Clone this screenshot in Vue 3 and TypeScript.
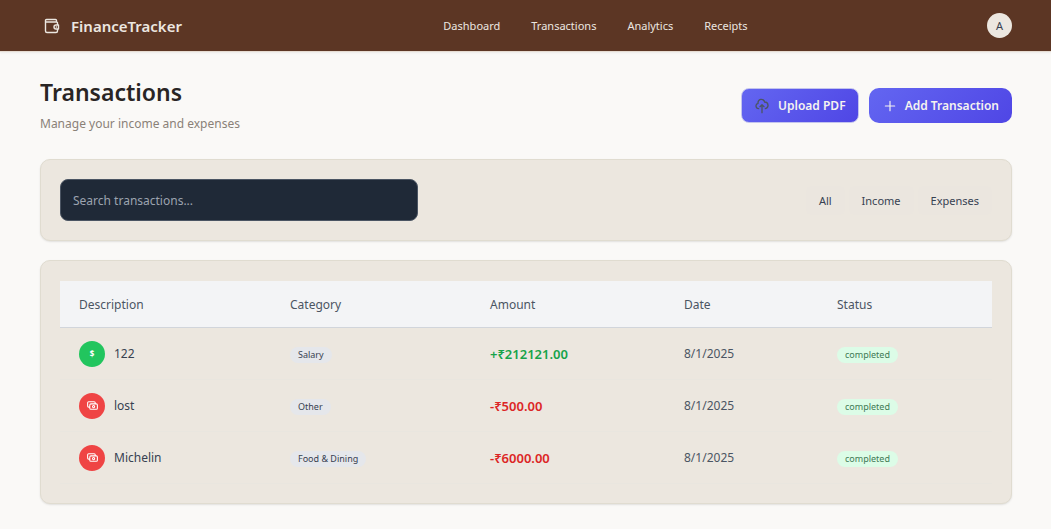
<script setup lang="ts">
import { computed, ref } from 'vue'

interface Transaction {
  id: number
  description: string
  category: string
  amount: number
  date: string
  status: string
}

const links: string[] = ['Dashboard', 'Transactions', 'Analytics', 'Receipts']
const filters: string[] = ['All', 'Income', 'Expenses']
const columns: string[] = ['Description', 'Category', 'Amount', 'Date', 'Status']

const transactions: Transaction[] = [
  { id: 1, description: '122', category: 'Salary', amount: 212121, date: '8/1/2025', status: 'completed' },
  { id: 2, description: 'lost', category: 'Other', amount: -500, date: '8/1/2025', status: 'completed' },
  { id: 3, description: 'Michelin', category: 'Food & Dining', amount: -6000, date: '8/1/2025', status: 'completed' },
]

const search = ref('')
const filter = ref('All')

const visible = computed(() =>
  transactions.filter(
    (t) =>
      t.description.toLowerCase().includes(search.value.toLowerCase()) &&
      (filter.value === 'All' || (filter.value === 'Income') === t.amount > 0),
  ),
)

function money(amount: number): string {
  return `${amount > 0 ? '+' : '-'}₹${Math.abs(amount).toFixed(2)}`
}
</script>

<template>
  <div class="page">
    <header class="topbar">
      <a class="brand" href="#">
        <svg class="wallet" viewBox="0 0 16 16" aria-hidden="true">
          <path d="M13.500 6.500V5a1 1 0 0 0-1-1H2.500a1 1 0 0 1-1-1v-.5a1 1 0 0 1 1-1H11.500a1 1 0 0 1 1 1V4M1.500 3v10a1.500 1.500 0 0 0 1.500 1.500h9a1.500 1.500 0 0 0 1.500-1.500v-1.500M14.500 7H12a2 2 0 0 0 0 4H14.500Z" />
          <path d="M12.200 9h.3" />
        </svg>
        <span>FinanceTracker</span>
      </a>
      <nav class="nav" aria-label="Main">
        <a v-for="link in links" :key="link" href="#">{{ link }}</a>
      </nav>
      <button class="avatar" type="button" aria-label="Account">A</button>
    </header>

    <main class="main">
      <section class="heading">
        <div>
          <h1>Transactions</h1>
          <p>Manage your income and expenses</p>
        </div>
        <div class="actions">
          <button class="action upload" type="button">
            <svg viewBox="0 0 24 24" aria-hidden="true">
              <path d="M7 16a4 4 0 0 1-.88-7.903A5 5 0 1 1 15.9 6L16 6a5 5 0 0 1 1 9.900M15 13l-3-3m0 0l-3 3m3-3v12" />
            </svg>
            Upload PDF
          </button>
          <button class="action" type="button">
            <svg viewBox="0 0 24 24" aria-hidden="true"><path d="M12 4v16M4 12h16" /></svg>
            Add Transaction
          </button>
        </div>
      </section>

      <section class="card toolbar">
        <input v-model="search" type="text" aria-label="Search transactions" placeholder="Search transactions..." />
        <div class="filters">
          <button v-for="f in filters" :key="f" type="button" :aria-pressed="filter === f" @click="filter = f">
            {{ f }}
          </button>
        </div>
      </section>

      <section class="card listing">
        <table>
          <thead>
            <tr>
              <th v-for="column in columns" :key="column" scope="col">{{ column }}</th>
            </tr>
          </thead>
          <tbody>
            <tr v-for="t in visible" :key="t.id">
              <td>
                <div class="description">
                  <span class="mark" :class="t.amount > 0 ? 'income' : 'expense'">
                    <b v-if="t.amount > 0">$</b>
                    <svg v-else viewBox="0 0 24 24" aria-hidden="true">
                      <path d="M17 9V7a2 2 0 0 0-2-2H5a2 2 0 0 0-2 2v6a2 2 0 0 0 2 2h2m2 4h10a2 2 0 0 0 2-2v-6a2 2 0 0 0-2-2H9a2 2 0 0 0-2 2v6a2 2 0 0 0 2 2zm7-5a2 2 0 1 1-4 0 2 2 0 0 1 4 0z" />
                    </svg>
                  </span>
                  {{ t.description }}
                </div>
              </td>
              <td><span class="tag">{{ t.category }}</span></td>
              <td class="amount" :class="t.amount > 0 ? 'plus' : 'minus'">{{ money(t.amount) }}</td>
              <td class="date">{{ t.date }}</td>
              <td><span class="tag done">{{ t.status }}</span></td>
            </tr>
          </tbody>
        </table>
      </section>
    </main>
  </div>
</template>

<style>
body {
  margin: 0;
  background: #faf9f7;
}
</style>

<style scoped>
.page {
  color: #374151;
  font: 12px/20px 'Noto Sans', 'Open Sans', sans-serif;
}

button,
input {
  font: inherit;
}

a {
  color: inherit;
  text-decoration: none;
}

svg {
  fill: none;
  stroke: currentColor;
  stroke-linecap: round;
  stroke-linejoin: round;
  stroke-width: 2;
}

.topbar {
  display: flex;
  align-items: center;
  justify-content: space-between;
  height: 52px;
  padding: 0 39px 0 44px;
  background: #5c3624;
  border-bottom: 1px solid #e7ddd3;
  box-shadow: 0 1px 2px rgb(0 0 0 / 6%);
  box-sizing: border-box;
  color: #ece7e0;
}

.brand {
  display: flex;
  align-items: center;
  gap: 11px;
  padding-right: 22px;
  font-size: 15px;
  font-weight: 600;
}

.wallet {
  width: 16px;
  height: 16px;
  stroke-width: 1.4;
}

.nav {
  display: flex;
  gap: 31px;
  font-size: 11px;
}

.avatar {
  width: 25px;
  height: 25px;
  padding: 0;
  border: 0;
  border-radius: 50%;
  background: #ece7e0;
  color: #374151;
  font-size: 11px;
}

.main {
  display: flex;
  flex-direction: column;
  gap: 19px;
  padding: 25px 39px 25px 40px;
}

.heading {
  display: flex;
  align-items: center;
  justify-content: space-between;
  padding-bottom: 7px;
}

h1 {
  margin: 0;
  color: #292524;
  font-size: 23px;
  font-weight: 600;
  line-height: 30px;
}

p {
  margin: 6px 0 0;
  padding-top: 1px;
  color: #8a8178;
  line-height: 19px;
}

.actions {
  display: flex;
  align-items: center;
  gap: 10px;
}

.action {
  display: flex;
  align-items: center;
  gap: 8px;
  height: 35px;
  padding: 1px 13px 0 14px;
  border: 0;
  border-radius: 10px;
  background: linear-gradient(135deg, #6366f1, #4f46e5);
  color: #f5f3f0;
  font-weight: 600;
}

.action svg {
  width: 14px;
  height: 14px;
}

.upload {
  padding: 1px 12px 0;
  border: 1px solid #c3c4ee;
  border-radius: 8px;
}

.action.upload svg {
  width: 16px;
  height: 16px;
  color: #4b5563;
}

.card {
  padding: 19px;
  border: 1px solid #e0dcd0;
  border-radius: 10px;
  background: #ece7df;
  box-shadow: 0 1px 2px rgb(0 0 0 / 10%);
}

.listing {
  padding-top: 20px;
}

.toolbar {
  display: flex;
  align-items: center;
  justify-content: space-between;
}

input {
  width: 358px;
  height: 42px;
  padding: 0 12px;
  border: 1px solid #4b5563;
  border-radius: 8px;
  background: #1f2937;
  box-sizing: border-box;
  color: #f3f4f6;
}

input::placeholder {
  color: #9ca3af;
}

.filters {
  display: flex;
  gap: 4px;
}

.filters button {
  padding: 5px 13px 4px;
  border: 0;
  border-radius: 6px;
  background: #ebe6df;
  color: #374151;
  font-size: 11px;
}

table {
  width: 100%;
  border-spacing: 0;
  table-layout: fixed;
}

th,
td {
  padding: 0 19px;
  text-align: left;
}

th {
  height: 44px;
  padding-top: 2px;
  border-bottom: 1px solid #d1d5db;
  background: #f3f4f6;
  color: #4b5563;
  font-weight: 400;
}

th:nth-child(1) {
  width: 173px;
}

th:nth-child(2) {
  width: 162px;
}

th:nth-child(3) {
  width: 156px;
}

th:nth-child(4) {
  width: 115px;
}

td {
  height: 51px;
  border-bottom: 1px solid #e9e6df;
}

.description {
  display: flex;
  align-items: center;
  gap: 9px;
}

.mark {
  display: grid;
  place-items: center;
  width: 26px;
  height: 26px;
  border-radius: 50%;
  color: #fff;
}

.mark svg {
  width: 13px;
  height: 13px;
}

.mark b {
  font-size: 8px;
  line-height: 10px;
}

.income {
  background: #22c55e;
}

.expense {
  background: #ef4444;
}

.tag {
  display: inline-block;
  padding: 0 8px;
  border-radius: 8px;
  background: #e5e7eb;
  font-size: 9px;
  line-height: 16px;
}

.done {
  background: #dcfce7;
  color: #3f7a55;
}

.amount {
  font-size: 13px;
  font-weight: 600;
}

.plus {
  color: #16a34a;
}

.minus {
  color: #dc2626;
}

.date {
  color: #4b5563;
}
</style>
